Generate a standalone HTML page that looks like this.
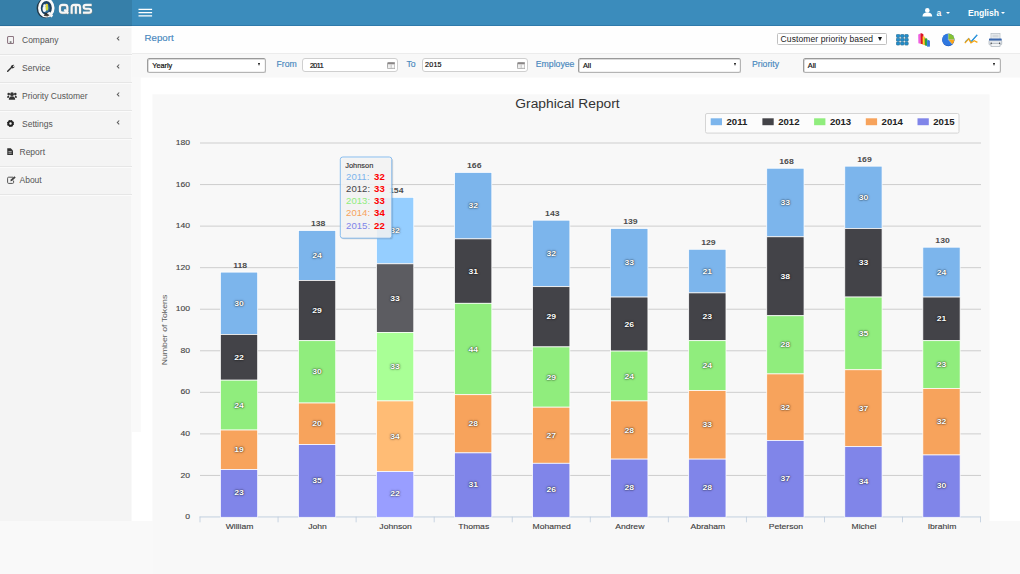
<!DOCTYPE html>
<html><head><meta charset="utf-8"><title>QMS Report</title>
<style>
*{box-sizing:border-box;margin:0;padding:0}
html,body{width:1020px;height:574px;overflow:hidden;background:#f9f9f9;font-family:"Liberation Sans",sans-serif}
#app{position:relative;width:1020px;height:574px;overflow:hidden;background:#f9f9f9}
.abs{position:absolute}
#topbar{left:0;top:0;width:1020px;height:26px;background:#3b8cbc;border-bottom:1.2px solid #2f7aab}
#logo{left:0;top:0;width:131.5px;height:26px;background:#367fa9;border-bottom:1.2px solid #2b6f9b}
#side{left:0;top:26px;width:131.4px;height:495px;background:#f4f4f4}
.mi{position:absolute;left:0;width:132px;height:28px;color:#555;font-size:8.5px;line-height:29px}
.sep{position:absolute;left:0;width:132px;height:2px;border-top:1px solid #e6e6e6;border-bottom:1px solid #fbfbfb}
.mi span{position:absolute;left:22px;top:0;white-space:nowrap}
.mi .chev{position:absolute;left:115.6px;top:9.4px}
.mi svg.ic{position:absolute;left:7px;top:9.6px}
#hdr{left:132px;top:26px;width:888px;height:28px;background:#fefefe;border-bottom:1px solid #ececec}
#filt{left:132px;top:54px;width:888px;height:23px;background:#f8f8f8}
#panel{left:141px;top:77.3px;width:879px;height:443.7px;background:#fff}
#strip{left:132px;top:432px;width:10px;height:89px;background:#fff}
#chartbg{left:153px;top:94px;width:837px;height:480px;background:#f8f8f8}
.lbl{color:#4787bd;-webkit-text-stroke:0.15px #4787bd;font-size:8.7px;white-space:nowrap;line-height:12px}
.sel{background:#fff;border:1px solid #b4b4b4;border-top-color:#999;border-left-color:#9c9c9c;border-radius:2.5px;font-size:7.3px;color:#111;line-height:13.4px;white-space:nowrap;box-shadow:inset 0.7px 0.7px 0 #cfcfcf,inset -0.5px -0.5px 0 #e4e4e4;-webkit-text-stroke:0.2px #111}
.inp{background:#fff;border:1px solid #cfcfcf;border-radius:3px;font-size:7.1px;color:#111;line-height:12px;white-space:nowrap;letter-spacing:-0.25px;-webkit-text-stroke:0.2px #111}
.arr{position:absolute;width:0;height:0;border-left:1.9px solid transparent;border-right:1.9px solid transparent;border-top:3.3px solid #111}
</style></head><body>
<div id="app">
 <div id="topbar" class="abs"></div>
 <div id="logo" class="abs"></div>
 <div id="side" class="abs"></div>
 <div id="hdr" class="abs"></div>
 <div id="filt" class="abs"></div>
 <div id="strip" class="abs"></div>
 <svg class="abs" style="left:0;top:0" width="1020" height="574"><rect x="140.8" y="77.6" width="880" height="443.3" fill="#fff"/><rect x="152.4" y="94.3" width="837.1" height="480" fill="#f8f8f8"/></svg>

 <!-- logo -->
 <svg class="abs" style="left:30px;top:0" width="70" height="26" viewBox="30 0 70 26">
  <ellipse cx="45.2" cy="8.3" rx="7.2" ry="8.5" fill="none" stroke="#1c2a36" stroke-width="2.8" opacity="0.85"/>
  <ellipse cx="46" cy="7.8" rx="5.6" ry="6.8" fill="#1d3f5e"/>
  <ellipse cx="46" cy="8.2" rx="3.6" ry="4.8" fill="#2f6fa0"/>
  <ellipse cx="46.3" cy="7.9" rx="6.9" ry="8.3" fill="none" stroke="#fbfbfb" stroke-width="2.7"/>
  <path d="M46.5 13.5 L51.5 17.4 L53.2 15.6 L49.5 11.8 Z" fill="#f6f6f6"/>
  <path d="M43.6 15.8 L47.5 16.6 L49.5 15.2 L46 12.6 Z" fill="#2a2420" opacity="0.85"/>
  <ellipse cx="44.4" cy="8.9" rx="1.8" ry="3" fill="#f4f6f8"/>
  <circle cx="44.6" cy="5.6" r="1.3" fill="#f4f6f8"/>
  <ellipse cx="46.9" cy="8" rx="1.4" ry="2.8" fill="#cfd83a"/>
  <circle cx="46.8" cy="5" r="1.2" fill="#f0d030"/>
  <g fill="none" stroke="#c9a07a" stroke-width="2.2" stroke-linejoin="round" stroke-linecap="butt" opacity="0.55" transform="translate(0.4,0.5)">
   <path d="M62.3 4.9 H64.9 Q67.3 4.9 67.3 7.3 V10.2 Q67.3 12.6 64.9 12.6 H62.3 Q59.9 12.6 59.9 10.2 V7.3 Q59.9 4.9 62.3 4.9 Z M64.3 9.6 L68.2 13.4"/>
   <path d="M71.6 13.7 V7.3 Q71.6 4.9 74 4.9 H77.6 Q80 4.9 80 7.3 V13.7 M75.8 4.9 V13.7"/>
   <path d="M91.6 4.9 H85.8 Q83.6 4.9 83.6 6.85 Q83.6 8.8 85.8 8.8 H88.8 Q91 8.8 91 10.7 Q91 12.6 88.8 12.6 H82.9"/>
  </g>
  <g fill="none" stroke="#f6f6f6" stroke-width="2.1" stroke-linejoin="round" stroke-linecap="butt">
   <path d="M62.3 4.9 H64.9 Q67.3 4.9 67.3 7.3 V10.2 Q67.3 12.6 64.9 12.6 H62.3 Q59.9 12.6 59.9 10.2 V7.3 Q59.9 4.9 62.3 4.9 Z M64.3 9.6 L68.2 13.4"/>
   <path d="M71.6 13.7 V7.3 Q71.6 4.9 74 4.9 H77.6 Q80 4.9 80 7.3 V13.7 M75.8 4.9 V13.7"/>
   <path d="M91.6 4.9 H85.8 Q83.6 4.9 83.6 6.85 Q83.6 8.8 85.8 8.8 H88.8 Q91 8.8 91 10.7 Q91 12.6 88.8 12.6 H82.9"/>
  </g>
 </svg>
 <!-- hamburger -->
 <svg class="abs" style="left:138px;top:8px" width="15" height="10" viewBox="138 8 15 10"><path d="M138.5 9.4 H152.1 M138.5 12.6 H152.1 M138.5 15.8 H152.1" stroke="#fff" stroke-width="1.15" fill="none"/></svg>
 <!-- user -->
 <svg class="abs" style="left:921.5px;top:8px" width="11" height="9" viewBox="0 0 11 9"><circle cx="5.3" cy="2.4" r="2.3" fill="#fff"/><path d="M0.5 8.5 Q0.5 4.6 5.3 4.6 Q10.2 4.6 10.2 8.5 Z" fill="#fff"/></svg>
 <div class="abs" style="left:936.5px;top:7px;color:#fff;font-weight:bold;font-size:8.6px;line-height:12px">a</div>
 <div class="abs arr" style="left:945.8px;top:12.2px;border-top-color:#fff;border-left-width:2.2px;border-right-width:2.2px;border-top-width:2.4px"></div>
 <div class="abs" style="left:968px;top:7px;color:#fff;font-weight:bold;font-size:8.6px;line-height:12px">English</div>
 <div class="abs arr" style="left:1000.5px;top:12.2px;border-top-color:#fff;border-left-width:2.2px;border-right-width:2.2px;border-top-width:2.4px"></div>

 <!-- sidebar items -->
 <div class="mi" style="top:26px"><svg class="ic" width="7.2" height="8" viewBox="0 0 8 9"><rect x="0.6" y="0.6" width="6.8" height="7.8" rx="1" fill="none" stroke="#8c7580" stroke-width="1.2"/><rect x="3" y="6.2" width="2" height="1.2" fill="#333"/></svg><span>Company</span><svg class="chev" width="5" height="7" viewBox="0 0 5 7"><path d="M3.2 1.5 L1.3 3.4 L3.2 5.3" fill="none" stroke="#5c5c5c" stroke-width="1.05"/></svg></div>
 <div class="mi" style="top:54px"><svg class="ic" width="8" height="8" viewBox="0 0 9 9"><path d="M0.8 8.2 L5 4" stroke="#333" stroke-width="1.6" stroke-linecap="round"/><path d="M4.2 2.8 Q5.5 0.3 8.2 1 L6.6 2.6 L7 3.6 L8.6 2.2 Q8.8 4.8 6 5 Z" fill="#333"/></svg><span>Service</span><svg class="chev" width="5" height="7" viewBox="0 0 5 7"><path d="M3.2 1.5 L1.3 3.4 L3.2 5.3" fill="none" stroke="#5c5c5c" stroke-width="1.05"/></svg></div>
 <div class="mi" style="top:82px"><svg class="ic" width="10" height="8" viewBox="0 0 10 8"><circle cx="5" cy="2.2" r="1.9" fill="#333"/><circle cx="1.7" cy="2" r="1.3" fill="#333"/><circle cx="8.3" cy="2" r="1.3" fill="#333"/><path d="M1.8 7.8 Q1.8 4.2 5 4.2 Q8.2 4.2 8.2 7.8 Z" fill="#333"/><path d="M0 5.8 Q0 3.4 2.2 3.6 L2 5.8 Z M10 5.8 Q10 3.4 7.8 3.6 L8 5.8 Z" fill="#333"/></svg><span>Priority Customer</span><svg class="chev" width="5" height="7" viewBox="0 0 5 7"><path d="M3.2 1.5 L1.3 3.4 L3.2 5.3" fill="none" stroke="#5c5c5c" stroke-width="1.05"/></svg></div>
 <div class="mi" style="top:110px"><svg class="ic" style="left:7.3px;top:10.2px" width="7" height="7" viewBox="0 0 8 8"><circle cx="4" cy="4" r="2.5" fill="none" stroke="#222" stroke-width="2.2"/><circle cx="4" cy="4" r="3.4" fill="none" stroke="#222" stroke-width="1.2" stroke-dasharray="1.5 1.17"/></svg><span>Settings</span><svg class="chev" width="5" height="7" viewBox="0 0 5 7"><path d="M3.2 1.5 L1.3 3.4 L3.2 5.3" fill="none" stroke="#5c5c5c" stroke-width="1.05"/></svg></div>
 <div class="mi" style="top:138px"><svg class="ic" style="top:10.2px" width="6.3" height="7.2" viewBox="0 0 7 8"><path d="M0.3 0.3 H4.2 L6.7 2.8 V7.7 H0.3 Z" fill="#333"/><path d="M1.6 4 H5.2 M1.6 5.8 H5.2" stroke="#f4f4f4" stroke-width="0.7"/></svg><span style="left:19.5px">Report</span></div>
 <div class="mi" style="top:166px"><svg class="ic" width="9" height="8" viewBox="0 0 9 8"><path d="M6 1.2 H1.6 Q0.6 1.2 0.6 2.2 V6.4 Q0.6 7.4 1.6 7.4 H5.6 Q6.6 7.4 6.6 6.4 V4.6" fill="none" stroke="#555" stroke-width="1"/><path d="M3.4 5.2 L3.8 3.6 L7.4 0.3 L8.7 1.5 L5 4.9 Z" fill="#444"/></svg><span style="left:19.5px">About</span></div>

 <div class="abs" style="left:0;top:26.9px;width:132px;height:1.4px;background:#fdfdfd"></div>
 <div class="sep" style="top:53.8px"></div>
 <div class="sep" style="top:81.8px"></div>
 <div class="sep" style="top:109.8px"></div>
 <div class="sep" style="top:137.8px"></div>
 <div class="sep" style="top:165.8px"></div>
 <div class="sep" style="top:193.8px"></div>
 <!-- header -->
 <div class="abs" style="left:144.6px;top:31.5px;color:#4686bd;-webkit-text-stroke:0.15px #4686bd;font-size:9.7px;line-height:12px">Report</div>
 <div class="abs" style="left:776.9px;top:33.2px;width:109.7px;height:11.8px;background:#fff;border:1px solid #c0c0c0;border-radius:1.5px"></div>
 <div class="abs" style="left:780.6px;top:33.4px;font-size:8.5px;color:#222;line-height:12px;white-space:nowrap;letter-spacing:0.1px">Customer priority based</div>
 <div class="abs arr" style="left:878.3px;top:37.2px;border-left-width:2.1px;border-right-width:2.1px;border-top-width:4.1px"></div>
 <!-- icons -->
 <svg class="abs" style="left:895.6px;top:33.7px" width="13" height="12" viewBox="0 0 13 12">
  <rect x="0.2" y="0.2" width="12.3" height="11" fill="#dfe7ec"/>
  <g fill="#1f8fd2" stroke="#2d7396" stroke-width="0.7"><rect x="0.4" y="0.4" width="3.4" height="3" rx="0.9"/><rect x="4.6" y="0.4" width="3.4" height="3" rx="0.9"/><rect x="8.8" y="0.4" width="3.4" height="3" rx="0.9"/><rect x="0.4" y="4.2" width="3.4" height="3" rx="0.9"/><rect x="4.6" y="4.2" width="3.4" height="3" rx="0.9"/><rect x="8.8" y="4.2" width="3.4" height="3" rx="0.9"/><rect x="0.4" y="8" width="3.4" height="3" rx="0.9"/><rect x="4.6" y="8" width="3.4" height="3" rx="0.9"/><rect x="8.8" y="8" width="3.4" height="3" rx="0.9"/></g>
 </svg>
 <svg class="abs" style="left:917px;top:32px" width="14" height="16" viewBox="917 32 14 16">
  <path d="M918.2 34.4 L920.4 33.6 L920.6 43.8 L918.4 43.2 Z" fill="#ee5fe0"/>
  <path d="M920.4 33.6 L921.6 33.2 L923.4 34.2 L923.6 44.6 L920.6 43.8 Z" fill="#dc1626"/>
  <path d="M922.6 36.4 L924.4 36.2 L924.8 45.2 L922.8 44.6 Z" fill="#f6e228"/>
  <path d="M924.2 37.4 L925.2 37.2 L925.4 45.2 L924.4 45 Z" fill="#f08a1a"/>
  <path d="M924.8 38.6 L926.6 38.2 L927.4 39 L927.6 46 L925 45.4 Z" fill="#2fa436"/>
  <path d="M926.8 40.4 L928.6 40 L929.6 41 L929.6 46.4 L927.2 46.7 L926.9 45.8 Z" fill="#3a84e4"/>
  <path d="M928.6 40 L929.6 41 L929.6 46.4 L928.8 46.5 Z" fill="#2a62c0"/>
 </svg>
 <svg class="abs" style="left:941px;top:33px" width="15" height="14" viewBox="941 33 15 14">
  <circle cx="948.3" cy="40.1" r="6.1" fill="#1c4fb0"/>
  <circle cx="948.3" cy="39.6" r="6.1" fill="#2f78e0"/>
  <path d="M948.3 39.6 L948.3 33.5 A6.1 6.1 0 0 1 954.4 39.6 Z" fill="#86c232"/>
  <path d="M948.3 39.6 L954.4 39.6 A6.1 6.1 0 0 1 952.3 44.2 Z" fill="#fba316"/>
  <path d="M948.3 39.6 L948.3 33.3 M948.3 39.6 L954.6 39.6 M948.3 39.6 L952.4 44.4" stroke="#e8f0d8" stroke-width="0.35" fill="none"/>
 </svg>
 <svg class="abs" style="left:963px;top:33px" width="16" height="12" viewBox="963 33 16 12">
  <path d="M965.2 41.9 L968.7 38.7 L971 41.8 L977.2 34.9" fill="none" stroke="#2f95dc" stroke-width="1.15"/>
  <path d="M964.8 43.1 L968.7 38.9 L971 42.8 L974.2 40.7 L977.4 42.4" fill="none" stroke="#f5a614" stroke-width="1.35"/>
  <path d="M971.6 41.2 L977.2 34.9" fill="none" stroke="#2f95dc" stroke-width="1.15"/>
 </svg>
 <svg class="abs" style="left:988px;top:32px" width="15" height="16" viewBox="988 32 15 16">
  <rect x="991" y="33.4" width="9" height="6" fill="#eef1f3" stroke="#b4bcc4" stroke-width="0.7"/>
  <path d="M992.4 35.2 H998.6 M992.4 36.8 H998.6" stroke="#b9bfc6" stroke-width="0.7"/>
  <rect x="989" y="40.2" width="12.7" height="4.6" rx="0.8" fill="#e3e7eb" stroke="#a9b1ba" stroke-width="0.7"/>
  <rect x="989" y="38.5" width="12.7" height="2.1" rx="0.6" fill="#3a66ad"/>
  <rect x="991" y="43.6" width="9" height="2.8" fill="#f3f5f6" stroke="#a9b1ba" stroke-width="0.7"/>
  <circle cx="991.2" cy="43.2" r="0.65" fill="#2c2c2c"/><circle cx="999.6" cy="43.2" r="0.65" fill="#2c2c2c"/>
 </svg>

 <!-- filter row -->
 <div class="abs sel" style="left:147px;top:58.3px;width:118.6px;height:14.3px;padding-left:4.2px">Yearly</div>
 <div class="abs arr" style="left:257.5px;top:63.3px"></div>
 <div class="abs lbl" style="left:276.5px;top:58.3px">From</div>
 <div class="abs inp" style="left:302.3px;top:58.2px;width:96.2px;height:14px;padding-left:6.6px;line-height:14.6px;letter-spacing:-0.5px">2011</div>
 <div class="abs lbl" style="left:406.5px;top:58.3px">To</div>
 <div class="abs inp" style="left:422px;top:58.2px;width:106px;height:14px;padding-left:2px;line-height:13.4px;letter-spacing:0.25px">2015</div>
 <div class="abs lbl" style="left:535.8px;top:58.3px">Employee</div>
 <div class="abs sel" style="left:578.2px;top:58.3px;width:162.6px;height:14.3px;padding-left:3.8px;line-height:13px">All</div>
 <div class="abs arr" style="left:733.7px;top:63.3px"></div>
 <div class="abs lbl" style="left:752px;top:58.3px">Priority</div>
 <div class="abs sel" style="left:803px;top:58.3px;width:197.5px;height:14.3px;padding-left:3.8px;line-height:13px">All</div>
 <div class="abs arr" style="left:992.5px;top:63.3px"></div>
 <!-- calendar icons -->
 <svg class="abs" style="left:386.8px;top:62.1px" width="8.4" height="7.2" viewBox="0 0 8.4 7.2"><rect x="0.4" y="0.4" width="7.6" height="6.4" rx="1.2" fill="#eee" stroke="#8e8e8e" stroke-width="0.8"/><rect x="0.6" y="0.6" width="7.2" height="1.7" rx="0.8" fill="#8a8686"/><path d="M4.2 2.4 V6.6" stroke="#b5b5b5" stroke-width="0.7"/><rect x="5" y="3.4" width="2" height="1.6" fill="#fafafa"/></svg>
 <svg class="abs" style="left:516.8px;top:62.1px" width="8.4" height="7.2" viewBox="0 0 8.4 7.2"><rect x="0.4" y="0.4" width="7.6" height="6.4" rx="1.2" fill="#eee" stroke="#8e8e8e" stroke-width="0.8"/><rect x="0.6" y="0.6" width="7.2" height="1.7" rx="0.8" fill="#8a8686"/><path d="M4.2 2.4 V6.6" stroke="#b5b5b5" stroke-width="0.7"/><rect x="5" y="3.4" width="2" height="1.6" fill="#fafafa"/></svg>

<svg width="1020" height="574" style="position:absolute;left:0;top:0" font-family="Liberation Sans, sans-serif">
<text transform="translate(190.00,519.10) scale(1.09,1)" text-anchor="end" font-size="7.9" font-weight="normal" fill="#444" stroke="#444" stroke-width="0.12">0</text>
<rect x="200.0" y="474.94" width="781.0" height="1" fill="#cecece"/>
<text transform="translate(190.00,477.54) scale(1.09,1)" text-anchor="end" font-size="7.9" font-weight="normal" fill="#444" stroke="#444" stroke-width="0.12">20</text>
<rect x="200.0" y="433.39" width="781.0" height="1" fill="#cecece"/>
<text transform="translate(190.00,435.99) scale(1.09,1)" text-anchor="end" font-size="7.9" font-weight="normal" fill="#444" stroke="#444" stroke-width="0.12">40</text>
<rect x="200.0" y="391.83" width="781.0" height="1" fill="#cecece"/>
<text transform="translate(190.00,394.43) scale(1.09,1)" text-anchor="end" font-size="7.9" font-weight="normal" fill="#444" stroke="#444" stroke-width="0.12">60</text>
<rect x="200.0" y="350.28" width="781.0" height="1" fill="#cecece"/>
<text transform="translate(190.00,352.88) scale(1.09,1)" text-anchor="end" font-size="7.9" font-weight="normal" fill="#444" stroke="#444" stroke-width="0.12">80</text>
<rect x="200.0" y="308.72" width="781.0" height="1" fill="#cecece"/>
<text transform="translate(190.00,311.32) scale(1.09,1)" text-anchor="end" font-size="7.9" font-weight="normal" fill="#444" stroke="#444" stroke-width="0.12">100</text>
<rect x="200.0" y="267.17" width="781.0" height="1" fill="#cecece"/>
<text transform="translate(190.00,269.77) scale(1.09,1)" text-anchor="end" font-size="7.9" font-weight="normal" fill="#444" stroke="#444" stroke-width="0.12">120</text>
<rect x="200.0" y="225.61" width="781.0" height="1" fill="#cecece"/>
<text transform="translate(190.00,228.21) scale(1.09,1)" text-anchor="end" font-size="7.9" font-weight="normal" fill="#444" stroke="#444" stroke-width="0.12">140</text>
<rect x="200.0" y="184.06" width="781.0" height="1" fill="#cecece"/>
<text transform="translate(190.00,186.66) scale(1.09,1)" text-anchor="end" font-size="7.9" font-weight="normal" fill="#444" stroke="#444" stroke-width="0.12">160</text>
<rect x="200.0" y="142.50" width="781.0" height="1" fill="#cecece"/>
<text transform="translate(190.00,145.10) scale(1.09,1)" text-anchor="end" font-size="7.9" font-weight="normal" fill="#444" stroke="#444" stroke-width="0.12">180</text>
<rect x="199.6" y="516.50" width="781.4" height="0.9" fill="#bccbdc"/>
<rect x="199.60" y="516.70" width="0.8" height="5.6" fill="#bccbdc"/>
<rect x="277.65" y="516.70" width="0.8" height="5.6" fill="#bccbdc"/>
<rect x="355.70" y="516.70" width="0.8" height="5.6" fill="#bccbdc"/>
<rect x="433.75" y="516.70" width="0.8" height="5.6" fill="#bccbdc"/>
<rect x="511.80" y="516.70" width="0.8" height="5.6" fill="#bccbdc"/>
<rect x="589.85" y="516.70" width="0.8" height="5.6" fill="#bccbdc"/>
<rect x="667.90" y="516.70" width="0.8" height="5.6" fill="#bccbdc"/>
<rect x="745.95" y="516.70" width="0.8" height="5.6" fill="#bccbdc"/>
<rect x="824.00" y="516.70" width="0.8" height="5.6" fill="#bccbdc"/>
<rect x="902.05" y="516.70" width="0.8" height="5.6" fill="#bccbdc"/>
<rect x="980.10" y="516.70" width="0.8" height="5.6" fill="#bccbdc"/>
<rect x="220.38" y="272.12" width="37.3" height="62.33" fill="#7cb5ec" stroke="#fff" stroke-width="0.75"/>
<rect x="220.38" y="334.46" width="37.3" height="45.71" fill="#434348" stroke="#fff" stroke-width="0.75"/>
<rect x="220.38" y="380.17" width="37.3" height="49.87" fill="#90ed7d" stroke="#fff" stroke-width="0.75"/>
<rect x="220.38" y="430.03" width="37.3" height="39.48" fill="#f7a35c" stroke="#fff" stroke-width="0.75"/>
<rect x="220.38" y="469.51" width="37.3" height="47.79" fill="#8085e9" stroke="#fff" stroke-width="0.75"/>
<rect x="298.43" y="230.57" width="37.3" height="49.87" fill="#7cb5ec" stroke="#fff" stroke-width="0.75"/>
<rect x="298.43" y="280.43" width="37.3" height="60.26" fill="#434348" stroke="#fff" stroke-width="0.75"/>
<rect x="298.43" y="340.69" width="37.3" height="62.33" fill="#90ed7d" stroke="#fff" stroke-width="0.75"/>
<rect x="298.43" y="403.02" width="37.3" height="41.56" fill="#f7a35c" stroke="#fff" stroke-width="0.75"/>
<rect x="298.43" y="444.58" width="37.3" height="72.72" fill="#8085e9" stroke="#fff" stroke-width="0.75"/>
<rect x="376.48" y="197.32" width="37.3" height="66.49" fill="#95ceff" stroke="#fff" stroke-width="0.75"/>
<rect x="376.48" y="263.81" width="37.3" height="68.57" fill="#5c5c61" stroke="#fff" stroke-width="0.75"/>
<rect x="376.48" y="332.38" width="37.3" height="68.57" fill="#a9ff96" stroke="#fff" stroke-width="0.75"/>
<rect x="376.48" y="400.94" width="37.3" height="70.64" fill="#ffbc75" stroke="#fff" stroke-width="0.75"/>
<rect x="376.48" y="471.59" width="37.3" height="45.71" fill="#999eff" stroke="#fff" stroke-width="0.75"/>
<rect x="454.53" y="172.39" width="37.3" height="66.49" fill="#7cb5ec" stroke="#fff" stroke-width="0.75"/>
<rect x="454.53" y="238.88" width="37.3" height="64.41" fill="#434348" stroke="#fff" stroke-width="0.75"/>
<rect x="454.53" y="303.29" width="37.3" height="91.42" fill="#90ed7d" stroke="#fff" stroke-width="0.75"/>
<rect x="454.53" y="394.71" width="37.3" height="58.18" fill="#f7a35c" stroke="#fff" stroke-width="0.75"/>
<rect x="454.53" y="452.89" width="37.3" height="64.41" fill="#8085e9" stroke="#fff" stroke-width="0.75"/>
<rect x="532.57" y="220.18" width="37.3" height="66.49" fill="#7cb5ec" stroke="#fff" stroke-width="0.75"/>
<rect x="532.57" y="286.67" width="37.3" height="60.26" fill="#434348" stroke="#fff" stroke-width="0.75"/>
<rect x="532.57" y="346.92" width="37.3" height="60.26" fill="#90ed7d" stroke="#fff" stroke-width="0.75"/>
<rect x="532.57" y="407.18" width="37.3" height="56.10" fill="#f7a35c" stroke="#fff" stroke-width="0.75"/>
<rect x="532.57" y="463.28" width="37.3" height="54.02" fill="#8085e9" stroke="#fff" stroke-width="0.75"/>
<rect x="610.62" y="228.49" width="37.3" height="68.57" fill="#7cb5ec" stroke="#fff" stroke-width="0.75"/>
<rect x="610.62" y="297.06" width="37.3" height="54.02" fill="#434348" stroke="#fff" stroke-width="0.75"/>
<rect x="610.62" y="351.08" width="37.3" height="49.87" fill="#90ed7d" stroke="#fff" stroke-width="0.75"/>
<rect x="610.62" y="400.94" width="37.3" height="58.18" fill="#f7a35c" stroke="#fff" stroke-width="0.75"/>
<rect x="610.62" y="459.12" width="37.3" height="58.18" fill="#8085e9" stroke="#fff" stroke-width="0.75"/>
<rect x="688.68" y="249.27" width="37.3" height="43.63" fill="#7cb5ec" stroke="#fff" stroke-width="0.75"/>
<rect x="688.68" y="292.90" width="37.3" height="47.79" fill="#434348" stroke="#fff" stroke-width="0.75"/>
<rect x="688.68" y="340.69" width="37.3" height="49.87" fill="#90ed7d" stroke="#fff" stroke-width="0.75"/>
<rect x="688.68" y="390.56" width="37.3" height="68.57" fill="#f7a35c" stroke="#fff" stroke-width="0.75"/>
<rect x="688.68" y="459.12" width="37.3" height="58.18" fill="#8085e9" stroke="#fff" stroke-width="0.75"/>
<rect x="766.73" y="168.23" width="37.3" height="68.57" fill="#7cb5ec" stroke="#fff" stroke-width="0.75"/>
<rect x="766.73" y="236.80" width="37.3" height="78.96" fill="#434348" stroke="#fff" stroke-width="0.75"/>
<rect x="766.73" y="315.76" width="37.3" height="58.18" fill="#90ed7d" stroke="#fff" stroke-width="0.75"/>
<rect x="766.73" y="373.93" width="37.3" height="66.49" fill="#f7a35c" stroke="#fff" stroke-width="0.75"/>
<rect x="766.73" y="440.42" width="37.3" height="76.88" fill="#8085e9" stroke="#fff" stroke-width="0.75"/>
<rect x="844.77" y="166.16" width="37.3" height="62.33" fill="#7cb5ec" stroke="#fff" stroke-width="0.75"/>
<rect x="844.77" y="228.49" width="37.3" height="68.57" fill="#434348" stroke="#fff" stroke-width="0.75"/>
<rect x="844.77" y="297.06" width="37.3" height="72.72" fill="#90ed7d" stroke="#fff" stroke-width="0.75"/>
<rect x="844.77" y="369.78" width="37.3" height="76.88" fill="#f7a35c" stroke="#fff" stroke-width="0.75"/>
<rect x="844.77" y="446.66" width="37.3" height="70.64" fill="#8085e9" stroke="#fff" stroke-width="0.75"/>
<rect x="922.83" y="247.19" width="37.3" height="49.87" fill="#7cb5ec" stroke="#fff" stroke-width="0.75"/>
<rect x="922.83" y="297.06" width="37.3" height="43.63" fill="#434348" stroke="#fff" stroke-width="0.75"/>
<rect x="922.83" y="340.69" width="37.3" height="47.79" fill="#90ed7d" stroke="#fff" stroke-width="0.75"/>
<rect x="922.83" y="388.48" width="37.3" height="66.49" fill="#f7a35c" stroke="#fff" stroke-width="0.75"/>
<rect x="922.83" y="454.97" width="37.3" height="62.33" fill="#8085e9" stroke="#fff" stroke-width="0.75"/>
<text transform="translate(239.03,305.79) scale(1.09,1)" text-anchor="middle" font-size="7.9" font-weight="bold" fill="#fff" style="text-shadow:0 0 2.2px rgba(0,0,0,.75),0 0 1.2px rgba(0,0,0,.6)">30</text>
<text transform="translate(239.03,359.81) scale(1.09,1)" text-anchor="middle" font-size="7.9" font-weight="bold" fill="#fff" style="text-shadow:0 0 2.2px rgba(0,0,0,.75),0 0 1.2px rgba(0,0,0,.6)">22</text>
<text transform="translate(239.03,407.60) scale(1.09,1)" text-anchor="middle" font-size="7.9" font-weight="bold" fill="#fff" style="text-shadow:0 0 2.2px rgba(0,0,0,.75),0 0 1.2px rgba(0,0,0,.6)">24</text>
<text transform="translate(239.03,452.27) scale(1.09,1)" text-anchor="middle" font-size="7.9" font-weight="bold" fill="#fff" style="text-shadow:0 0 2.2px rgba(0,0,0,.75),0 0 1.2px rgba(0,0,0,.6)">19</text>
<text transform="translate(239.03,495.41) scale(1.09,1)" text-anchor="middle" font-size="7.9" font-weight="bold" fill="#fff" style="text-shadow:0 0 2.2px rgba(0,0,0,.75),0 0 1.2px rgba(0,0,0,.6)">23</text>
<text transform="translate(240.12,267.82) scale(1.14,1)" text-anchor="middle" font-size="7.6" font-weight="bold" fill="#4d4d4d" >118</text>
<text transform="translate(239.53,529.30) scale(1.09,1)" text-anchor="middle" font-size="7.9" font-weight="normal" fill="#3c3c3c" stroke="#3c3c3c" stroke-width="0.12">William</text>
<text transform="translate(317.07,258.00) scale(1.09,1)" text-anchor="middle" font-size="7.9" font-weight="bold" fill="#fff" style="text-shadow:0 0 2.2px rgba(0,0,0,.75),0 0 1.2px rgba(0,0,0,.6)">24</text>
<text transform="translate(317.07,313.06) scale(1.09,1)" text-anchor="middle" font-size="7.9" font-weight="bold" fill="#fff" style="text-shadow:0 0 2.2px rgba(0,0,0,.75),0 0 1.2px rgba(0,0,0,.6)">29</text>
<text transform="translate(317.07,374.36) scale(1.09,1)" text-anchor="middle" font-size="7.9" font-weight="bold" fill="#fff" style="text-shadow:0 0 2.2px rgba(0,0,0,.75),0 0 1.2px rgba(0,0,0,.6)">30</text>
<text transform="translate(317.07,426.30) scale(1.09,1)" text-anchor="middle" font-size="7.9" font-weight="bold" fill="#fff" style="text-shadow:0 0 2.2px rgba(0,0,0,.75),0 0 1.2px rgba(0,0,0,.6)">20</text>
<text transform="translate(317.07,482.94) scale(1.09,1)" text-anchor="middle" font-size="7.9" font-weight="bold" fill="#fff" style="text-shadow:0 0 2.2px rgba(0,0,0,.75),0 0 1.2px rgba(0,0,0,.6)">35</text>
<text transform="translate(318.18,226.27) scale(1.14,1)" text-anchor="middle" font-size="7.6" font-weight="bold" fill="#4d4d4d" >138</text>
<text transform="translate(317.57,529.30) scale(1.09,1)" text-anchor="middle" font-size="7.9" font-weight="normal" fill="#3c3c3c" stroke="#3c3c3c" stroke-width="0.12">John</text>
<text transform="translate(395.12,233.07) scale(1.09,1)" text-anchor="middle" font-size="7.9" font-weight="bold" fill="#fff" style="text-shadow:0 0 2.2px rgba(0,0,0,.75),0 0 1.2px rgba(0,0,0,.6)">32</text>
<text transform="translate(395.12,300.59) scale(1.09,1)" text-anchor="middle" font-size="7.9" font-weight="bold" fill="#fff" style="text-shadow:0 0 2.2px rgba(0,0,0,.75),0 0 1.2px rgba(0,0,0,.6)">33</text>
<text transform="translate(395.12,369.16) scale(1.09,1)" text-anchor="middle" font-size="7.9" font-weight="bold" fill="#fff" style="text-shadow:0 0 2.2px rgba(0,0,0,.75),0 0 1.2px rgba(0,0,0,.6)">33</text>
<text transform="translate(395.12,438.77) scale(1.09,1)" text-anchor="middle" font-size="7.9" font-weight="bold" fill="#fff" style="text-shadow:0 0 2.2px rgba(0,0,0,.75),0 0 1.2px rgba(0,0,0,.6)">34</text>
<text transform="translate(395.12,496.44) scale(1.09,1)" text-anchor="middle" font-size="7.9" font-weight="bold" fill="#fff" style="text-shadow:0 0 2.2px rgba(0,0,0,.75),0 0 1.2px rgba(0,0,0,.6)">22</text>
<text transform="translate(396.23,193.02) scale(1.14,1)" text-anchor="middle" font-size="7.6" font-weight="bold" fill="#4d4d4d" >154</text>
<text transform="translate(395.62,529.30) scale(1.09,1)" text-anchor="middle" font-size="7.9" font-weight="normal" fill="#3c3c3c" stroke="#3c3c3c" stroke-width="0.12">Johnson</text>
<text transform="translate(473.18,208.13) scale(1.09,1)" text-anchor="middle" font-size="7.9" font-weight="bold" fill="#fff" style="text-shadow:0 0 2.2px rgba(0,0,0,.75),0 0 1.2px rgba(0,0,0,.6)">32</text>
<text transform="translate(473.18,273.58) scale(1.09,1)" text-anchor="middle" font-size="7.9" font-weight="bold" fill="#fff" style="text-shadow:0 0 2.2px rgba(0,0,0,.75),0 0 1.2px rgba(0,0,0,.6)">31</text>
<text transform="translate(473.18,351.50) scale(1.09,1)" text-anchor="middle" font-size="7.9" font-weight="bold" fill="#fff" style="text-shadow:0 0 2.2px rgba(0,0,0,.75),0 0 1.2px rgba(0,0,0,.6)">44</text>
<text transform="translate(473.18,426.30) scale(1.09,1)" text-anchor="middle" font-size="7.9" font-weight="bold" fill="#fff" style="text-shadow:0 0 2.2px rgba(0,0,0,.75),0 0 1.2px rgba(0,0,0,.6)">28</text>
<text transform="translate(473.18,487.09) scale(1.09,1)" text-anchor="middle" font-size="7.9" font-weight="bold" fill="#fff" style="text-shadow:0 0 2.2px rgba(0,0,0,.75),0 0 1.2px rgba(0,0,0,.6)">31</text>
<text transform="translate(474.28,168.09) scale(1.14,1)" text-anchor="middle" font-size="7.6" font-weight="bold" fill="#4d4d4d" >166</text>
<text transform="translate(473.68,529.30) scale(1.09,1)" text-anchor="middle" font-size="7.9" font-weight="normal" fill="#3c3c3c" stroke="#3c3c3c" stroke-width="0.12">Thomas</text>
<text transform="translate(551.22,255.92) scale(1.09,1)" text-anchor="middle" font-size="7.9" font-weight="bold" fill="#fff" style="text-shadow:0 0 2.2px rgba(0,0,0,.75),0 0 1.2px rgba(0,0,0,.6)">32</text>
<text transform="translate(551.22,319.29) scale(1.09,1)" text-anchor="middle" font-size="7.9" font-weight="bold" fill="#fff" style="text-shadow:0 0 2.2px rgba(0,0,0,.75),0 0 1.2px rgba(0,0,0,.6)">29</text>
<text transform="translate(551.22,379.55) scale(1.09,1)" text-anchor="middle" font-size="7.9" font-weight="bold" fill="#fff" style="text-shadow:0 0 2.2px rgba(0,0,0,.75),0 0 1.2px rgba(0,0,0,.6)">29</text>
<text transform="translate(551.22,437.73) scale(1.09,1)" text-anchor="middle" font-size="7.9" font-weight="bold" fill="#fff" style="text-shadow:0 0 2.2px rgba(0,0,0,.75),0 0 1.2px rgba(0,0,0,.6)">27</text>
<text transform="translate(551.22,492.29) scale(1.09,1)" text-anchor="middle" font-size="7.9" font-weight="bold" fill="#fff" style="text-shadow:0 0 2.2px rgba(0,0,0,.75),0 0 1.2px rgba(0,0,0,.6)">26</text>
<text transform="translate(552.32,215.88) scale(1.14,1)" text-anchor="middle" font-size="7.6" font-weight="bold" fill="#4d4d4d" >143</text>
<text transform="translate(551.72,529.30) scale(1.09,1)" text-anchor="middle" font-size="7.9" font-weight="normal" fill="#3c3c3c" stroke="#3c3c3c" stroke-width="0.12">Mohamed</text>
<text transform="translate(629.27,265.27) scale(1.09,1)" text-anchor="middle" font-size="7.9" font-weight="bold" fill="#fff" style="text-shadow:0 0 2.2px rgba(0,0,0,.75),0 0 1.2px rgba(0,0,0,.6)">33</text>
<text transform="translate(629.27,326.57) scale(1.09,1)" text-anchor="middle" font-size="7.9" font-weight="bold" fill="#fff" style="text-shadow:0 0 2.2px rgba(0,0,0,.75),0 0 1.2px rgba(0,0,0,.6)">26</text>
<text transform="translate(629.27,378.51) scale(1.09,1)" text-anchor="middle" font-size="7.9" font-weight="bold" fill="#fff" style="text-shadow:0 0 2.2px rgba(0,0,0,.75),0 0 1.2px rgba(0,0,0,.6)">24</text>
<text transform="translate(629.27,432.53) scale(1.09,1)" text-anchor="middle" font-size="7.9" font-weight="bold" fill="#fff" style="text-shadow:0 0 2.2px rgba(0,0,0,.75),0 0 1.2px rgba(0,0,0,.6)">28</text>
<text transform="translate(629.27,490.21) scale(1.09,1)" text-anchor="middle" font-size="7.9" font-weight="bold" fill="#fff" style="text-shadow:0 0 2.2px rgba(0,0,0,.75),0 0 1.2px rgba(0,0,0,.6)">28</text>
<text transform="translate(630.38,224.19) scale(1.14,1)" text-anchor="middle" font-size="7.6" font-weight="bold" fill="#4d4d4d" >139</text>
<text transform="translate(629.77,529.30) scale(1.09,1)" text-anchor="middle" font-size="7.9" font-weight="normal" fill="#3c3c3c" stroke="#3c3c3c" stroke-width="0.12">Andrew</text>
<text transform="translate(707.33,273.58) scale(1.09,1)" text-anchor="middle" font-size="7.9" font-weight="bold" fill="#fff" style="text-shadow:0 0 2.2px rgba(0,0,0,.75),0 0 1.2px rgba(0,0,0,.6)">21</text>
<text transform="translate(707.33,319.29) scale(1.09,1)" text-anchor="middle" font-size="7.9" font-weight="bold" fill="#fff" style="text-shadow:0 0 2.2px rgba(0,0,0,.75),0 0 1.2px rgba(0,0,0,.6)">23</text>
<text transform="translate(707.33,368.12) scale(1.09,1)" text-anchor="middle" font-size="7.9" font-weight="bold" fill="#fff" style="text-shadow:0 0 2.2px rgba(0,0,0,.75),0 0 1.2px rgba(0,0,0,.6)">24</text>
<text transform="translate(707.33,427.34) scale(1.09,1)" text-anchor="middle" font-size="7.9" font-weight="bold" fill="#fff" style="text-shadow:0 0 2.2px rgba(0,0,0,.75),0 0 1.2px rgba(0,0,0,.6)">33</text>
<text transform="translate(707.33,490.21) scale(1.09,1)" text-anchor="middle" font-size="7.9" font-weight="bold" fill="#fff" style="text-shadow:0 0 2.2px rgba(0,0,0,.75),0 0 1.2px rgba(0,0,0,.6)">28</text>
<text transform="translate(708.43,244.97) scale(1.14,1)" text-anchor="middle" font-size="7.6" font-weight="bold" fill="#4d4d4d" >129</text>
<text transform="translate(707.83,529.30) scale(1.09,1)" text-anchor="middle" font-size="7.9" font-weight="normal" fill="#3c3c3c" stroke="#3c3c3c" stroke-width="0.12">Abraham</text>
<text transform="translate(785.38,205.02) scale(1.09,1)" text-anchor="middle" font-size="7.9" font-weight="bold" fill="#fff" style="text-shadow:0 0 2.2px rgba(0,0,0,.75),0 0 1.2px rgba(0,0,0,.6)">33</text>
<text transform="translate(785.38,278.78) scale(1.09,1)" text-anchor="middle" font-size="7.9" font-weight="bold" fill="#fff" style="text-shadow:0 0 2.2px rgba(0,0,0,.75),0 0 1.2px rgba(0,0,0,.6)">38</text>
<text transform="translate(785.38,347.34) scale(1.09,1)" text-anchor="middle" font-size="7.9" font-weight="bold" fill="#fff" style="text-shadow:0 0 2.2px rgba(0,0,0,.75),0 0 1.2px rgba(0,0,0,.6)">28</text>
<text transform="translate(785.38,409.68) scale(1.09,1)" text-anchor="middle" font-size="7.9" font-weight="bold" fill="#fff" style="text-shadow:0 0 2.2px rgba(0,0,0,.75),0 0 1.2px rgba(0,0,0,.6)">32</text>
<text transform="translate(785.38,480.86) scale(1.09,1)" text-anchor="middle" font-size="7.9" font-weight="bold" fill="#fff" style="text-shadow:0 0 2.2px rgba(0,0,0,.75),0 0 1.2px rgba(0,0,0,.6)">37</text>
<text transform="translate(786.48,163.93) scale(1.14,1)" text-anchor="middle" font-size="7.6" font-weight="bold" fill="#4d4d4d" >168</text>
<text transform="translate(785.88,529.30) scale(1.09,1)" text-anchor="middle" font-size="7.9" font-weight="normal" fill="#3c3c3c" stroke="#3c3c3c" stroke-width="0.12">Peterson</text>
<text transform="translate(863.42,199.82) scale(1.09,1)" text-anchor="middle" font-size="7.9" font-weight="bold" fill="#fff" style="text-shadow:0 0 2.2px rgba(0,0,0,.75),0 0 1.2px rgba(0,0,0,.6)">30</text>
<text transform="translate(863.42,265.27) scale(1.09,1)" text-anchor="middle" font-size="7.9" font-weight="bold" fill="#fff" style="text-shadow:0 0 2.2px rgba(0,0,0,.75),0 0 1.2px rgba(0,0,0,.6)">33</text>
<text transform="translate(863.42,335.92) scale(1.09,1)" text-anchor="middle" font-size="7.9" font-weight="bold" fill="#fff" style="text-shadow:0 0 2.2px rgba(0,0,0,.75),0 0 1.2px rgba(0,0,0,.6)">35</text>
<text transform="translate(863.42,410.72) scale(1.09,1)" text-anchor="middle" font-size="7.9" font-weight="bold" fill="#fff" style="text-shadow:0 0 2.2px rgba(0,0,0,.75),0 0 1.2px rgba(0,0,0,.6)">37</text>
<text transform="translate(863.42,483.98) scale(1.09,1)" text-anchor="middle" font-size="7.9" font-weight="bold" fill="#fff" style="text-shadow:0 0 2.2px rgba(0,0,0,.75),0 0 1.2px rgba(0,0,0,.6)">34</text>
<text transform="translate(864.52,161.86) scale(1.14,1)" text-anchor="middle" font-size="7.6" font-weight="bold" fill="#4d4d4d" >169</text>
<text transform="translate(863.92,529.30) scale(1.09,1)" text-anchor="middle" font-size="7.9" font-weight="normal" fill="#3c3c3c" stroke="#3c3c3c" stroke-width="0.12">Michel</text>
<text transform="translate(941.48,274.62) scale(1.09,1)" text-anchor="middle" font-size="7.9" font-weight="bold" fill="#fff" style="text-shadow:0 0 2.2px rgba(0,0,0,.75),0 0 1.2px rgba(0,0,0,.6)">24</text>
<text transform="translate(941.48,321.37) scale(1.09,1)" text-anchor="middle" font-size="7.9" font-weight="bold" fill="#fff" style="text-shadow:0 0 2.2px rgba(0,0,0,.75),0 0 1.2px rgba(0,0,0,.6)">21</text>
<text transform="translate(941.48,367.08) scale(1.09,1)" text-anchor="middle" font-size="7.9" font-weight="bold" fill="#fff" style="text-shadow:0 0 2.2px rgba(0,0,0,.75),0 0 1.2px rgba(0,0,0,.6)">23</text>
<text transform="translate(941.48,424.22) scale(1.09,1)" text-anchor="middle" font-size="7.9" font-weight="bold" fill="#fff" style="text-shadow:0 0 2.2px rgba(0,0,0,.75),0 0 1.2px rgba(0,0,0,.6)">32</text>
<text transform="translate(941.48,488.13) scale(1.09,1)" text-anchor="middle" font-size="7.9" font-weight="bold" fill="#fff" style="text-shadow:0 0 2.2px rgba(0,0,0,.75),0 0 1.2px rgba(0,0,0,.6)">30</text>
<text transform="translate(942.58,242.89) scale(1.14,1)" text-anchor="middle" font-size="7.6" font-weight="bold" fill="#4d4d4d" >130</text>
<text transform="translate(941.98,529.30) scale(1.09,1)" text-anchor="middle" font-size="7.9" font-weight="normal" fill="#3c3c3c" stroke="#3c3c3c" stroke-width="0.12">Ibrahim</text>
<text transform="translate(167.4,330) rotate(-90) scale(1.09,1)" text-anchor="middle" font-size="8" fill="#5c5c5c">Number of Tokens</text>
<text transform="translate(567.50,108.40) scale(1.055,1)" text-anchor="middle" font-size="13.1" font-weight="normal" fill="#333" >Graphical Report</text>
<rect x="705.5" y="113.5" width="253.5" height="19.6" fill="#fcfcfc" stroke="#d0d0d0" stroke-width="0.9" rx="1.5"/>
<rect x="710.70" y="118.3" width="11.3" height="6.9" fill="#7cb5ec"/>
<text transform="translate(726.50,125.10) scale(1.09,1)" text-anchor="start" font-size="8.8" font-weight="bold" fill="#222" >2011</text>
<rect x="762.40" y="118.3" width="11.3" height="6.9" fill="#434348"/>
<text transform="translate(778.20,125.10) scale(1.09,1)" text-anchor="start" font-size="8.8" font-weight="bold" fill="#222" >2012</text>
<rect x="814.10" y="118.3" width="11.3" height="6.9" fill="#90ed7d"/>
<text transform="translate(829.90,125.10) scale(1.09,1)" text-anchor="start" font-size="8.8" font-weight="bold" fill="#222" >2013</text>
<rect x="865.80" y="118.3" width="11.3" height="6.9" fill="#f7a35c"/>
<text transform="translate(881.60,125.10) scale(1.09,1)" text-anchor="start" font-size="8.8" font-weight="bold" fill="#222" >2014</text>
<rect x="917.50" y="118.3" width="11.3" height="6.9" fill="#8085e9"/>
<text transform="translate(933.30,125.10) scale(1.09,1)" text-anchor="start" font-size="8.8" font-weight="bold" fill="#222" >2015</text>
<rect x="341.8" y="158.8" width="51.6" height="81" rx="2.5" fill="rgba(0,0,0,0.06)"/>
<rect x="341" y="158" width="51.6" height="81" rx="2.5" fill="rgba(0,0,0,0.12)"/>
<rect x="340.3" y="157" width="51.5" height="81.2" rx="2.5" fill="rgba(249,249,249,0.85)" stroke="#7cb5ec" stroke-width="0.9"/>
<text transform="translate(345.30,168.30) scale(1.0,1)" text-anchor="start" font-size="7.4" font-weight="normal" fill="#333" stroke="#333" stroke-width="0.15">Johnson</text>
<text transform="translate(346.10,180.00) scale(1.09,1)" text-anchor="start" font-size="8.8" font-weight="normal" fill="#7cb5ec" >2011:</text>
<text transform="translate(374.10,180.00) scale(1.09,1)" text-anchor="start" font-size="8.8" font-weight="bold" fill="#f00" >32</text>
<text transform="translate(346.10,192.15) scale(1.09,1)" text-anchor="start" font-size="8.8" font-weight="normal" fill="#434348" >2012:</text>
<text transform="translate(374.10,192.15) scale(1.09,1)" text-anchor="start" font-size="8.8" font-weight="bold" fill="#f00" >33</text>
<text transform="translate(346.10,204.30) scale(1.09,1)" text-anchor="start" font-size="8.8" font-weight="normal" fill="#90ed7d" >2013:</text>
<text transform="translate(374.10,204.30) scale(1.09,1)" text-anchor="start" font-size="8.8" font-weight="bold" fill="#f00" >33</text>
<text transform="translate(346.10,216.45) scale(1.09,1)" text-anchor="start" font-size="8.8" font-weight="normal" fill="#f7a35c" >2014:</text>
<text transform="translate(374.10,216.45) scale(1.09,1)" text-anchor="start" font-size="8.8" font-weight="bold" fill="#f00" >34</text>
<text transform="translate(346.10,228.60) scale(1.09,1)" text-anchor="start" font-size="8.8" font-weight="normal" fill="#8085e9" >2015:</text>
<text transform="translate(374.10,228.60) scale(1.09,1)" text-anchor="start" font-size="8.8" font-weight="bold" fill="#f00" >22</text>
</svg>

</div>
</body></html>
